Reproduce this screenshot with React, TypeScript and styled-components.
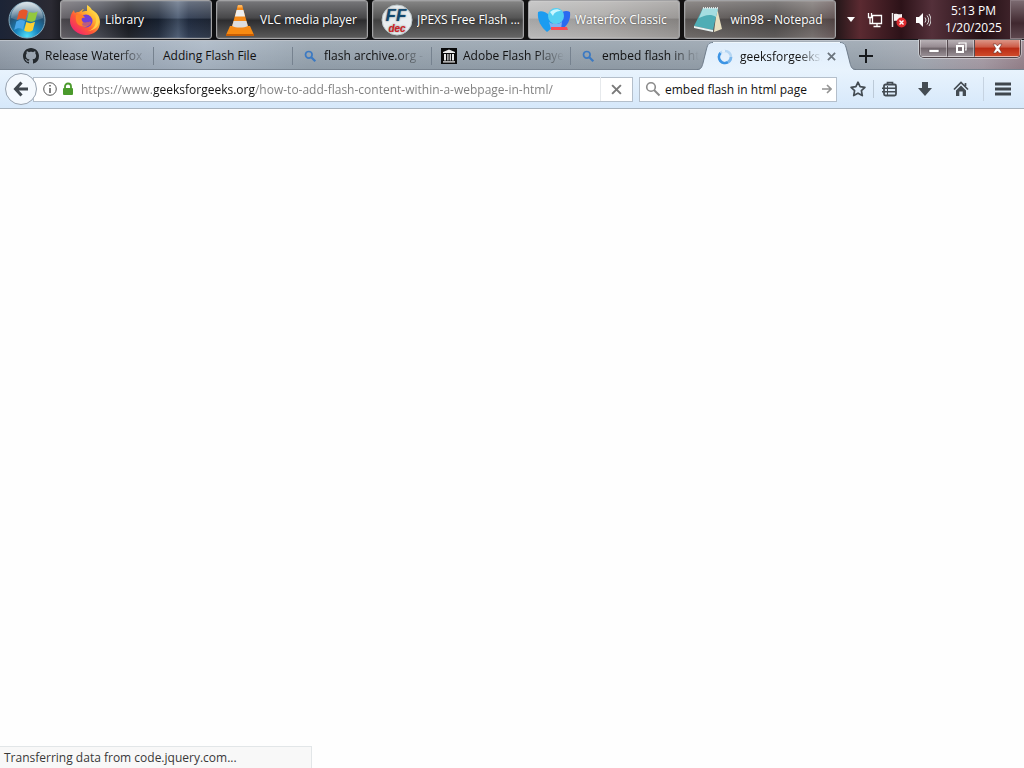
import React from 'react';
import styled, { createGlobalStyle, css } from 'styled-components';

const GlobalStyle = createGlobalStyle`
  *, *::before, *::after { box-sizing: border-box; }
  body { margin: 0; background: #fefefe; font: 12px/16px "Open Sans", "Noto Sans", sans-serif; color: #111; }
  button, input { font: inherit; color: inherit; margin: 0; }
  button { border: 0; background: none; padding: 0; cursor: default; }
  svg { display: block; flex: none; }
  ul { list-style: none; margin: 0; padding: 0; }
`;

const Desktop = styled.div`
  display: flex;
  flex-direction: column;
  min-height: 100vh;
`;

/* ---------- Taskbar ---------- */

const Taskbar = styled.header`
  display: flex;
  height: 40px;
  border-bottom: 1px solid #15161a;
  background: linear-gradient(90deg, #1c2436 0, #2b2a33 5%, #0c0d10 7%, #111 50%, #151112 81%, #5b2a31 84%, #2c1218 88%, #54303a 91%, #241015 96%, #4a2b33 100%);
`;

const StartButton = styled.button`
  width: 60px;
  padding: 1px 0 0 8px;
`;

const TaskList = styled.ul`
  display: flex;
  flex: 1;
  gap: 4px;
  min-width: 0;
`;

const TaskItem = styled.li`
  flex: 0 1 152px;
  min-width: 0;
`;

const taskTones = {
  navy: css`background: linear-gradient(180deg, #ffffff50 0, #ffffff18 45%, #00000030 50%, #ffffff10 100%), linear-gradient(90deg, #5a565c 0, #3d3f49 25%, #15181f 45%, #1b2638 65%, #46566e 78%, #26334a 85%, #232c3d 100%);`,
  dark: css`background: linear-gradient(180deg, #77777a 0, #48484a 45%, #2d2d2f 52%, #5a5a5a 100%);`,
  grey: css`background: linear-gradient(180deg, #858585 0, #555 45%, #414141 52%, #666 100%);`,
  light: css`background: linear-gradient(180deg, #ffffff50 0, #ffffff20 45%, #00000010 50%, #ffffff20 100%), linear-gradient(90deg, #b0b0b0, #a5a3a1 50%, #8d8a88);`,
  warm: css`background: linear-gradient(180deg, #ffffff48 0, #ffffff10 45%, #00000020 50%, #ffffff18 100%), linear-gradient(90deg, #625d5b 0, #4f4b4a 60%, #6b6462 85%, #5a4b4b 100%);`,
};

const TaskButton = styled.button<{ $tone: keyof typeof taskTones }>`
  display: flex;
  align-items: center;
  gap: 4px;
  width: 100%;
  height: 39px;
  padding: 0 2px 0 8px;
  border: 1px solid #a2a2a4;
  border-radius: 3px;
  box-shadow: inset 0 0 0 1px #ffffff18;
  color: #fff;
  text-shadow: 0 0 2px #0008;
  ${p => taskTones[p.$tone]}
`;

const TaskLabel = styled.span<{ $center?: boolean }>`
  flex: 1;
  padding-right: ${p => (p.$center ? 7 : 0)}px;
  overflow: hidden;
  white-space: nowrap;
  text-align: ${p => (p.$center ? 'center' : 'left')};
`;

const Tray = styled.div`
  display: flex;
  align-items: center;
  padding-left: 3px;
`;

const TrayButton = styled.button`
  display: grid;
  place-items: center;
  width: 24px;
  height: 20px;
`;

const Clock = styled.time`
  width: 75px;
  padding: 0 0 2px 2px;
  color: #fff;
  text-align: center;
  line-height: 17px;
`;

const ShowDesktop = styled.button`
  align-self: stretch;
  width: 14px;
  border: 1px solid #8a7a80;
  border-right: 0;
  background: linear-gradient(180deg, #7b6a70, #40282f 60%, #5d474e);
`;

/* ---------- Tab strip ---------- */

const TabStrip = styled.nav`
  position: relative;
  display: flex;
  align-items: stretch;
  height: 30px;
  padding-left: 14px;
  border-top: 1px solid #bcc2ca;
  background:
    linear-gradient(180deg, transparent 28px, #77828e 28px),
    linear-gradient(180deg, #ffffff20, #0000000c),
    linear-gradient(90deg, #8d98a5 0, #a3afbc 8%, #9eabba 14%, #a9b6c4 20%, #96a3af 30%, #94a0ab 60%, #98a3ae 84%, #a2a8b2 90%, #a69ba5 96%, #96818b 100%);
`;

const Tabs = styled.ul`
  display: flex;
  flex: 0 1 691px;
  min-width: 0;
`;

const Tab = styled.li`
  display: flex;
  flex: 0 1 139px;
  align-items: center;
  min-width: 0;
  height: 28px;
  margin-top: 1px;
  &:last-child { flex-basis: 135px; }
  & + &::before {
    content: '';
    align-self: center;
    width: 1px;
    height: 18px;
    background: #76828f;
  }
`;

const TabButton = styled.button<{ $faded?: boolean }>`
  display: flex;
  flex: 1;
  align-items: center;
  gap: 6px;
  min-width: 0;
  height: 100%;
  margin-right: 2px;
  padding-left: 9px;
  overflow: hidden;
  white-space: nowrap;
  ${p => p.$faded && css`mask-image: linear-gradient(90deg, #000 calc(100% - 34px), transparent calc(100% - 4px));`}
`;

/* The selected tab's curved edge lies over the end of its neighbour. */
const ActiveTab = styled.div`
  display: flex;
  flex: none;
  z-index: 1;
  margin: 1px 0 0 -8px;
`;

const ActiveBody = styled.div`
  display: flex;
  align-items: center;
  width: 127px;
  padding-left: 4px;
  border-top: 1px solid #eef6fc;
  background: linear-gradient(180deg, #dfedfb, #e8f3fd);
`;

const ActiveTitle = styled.button`
  display: flex;
  flex: 1;
  align-items: center;
  gap: 7px;
  min-width: 0;
  overflow: hidden;
  white-space: nowrap;
  mask-image: linear-gradient(90deg, #000 calc(100% - 24px), transparent);
`;

const IconButton = styled.button<{ $width?: number }>`
  display: grid;
  flex: none;
  place-items: center;
  width: ${p => p.$width ?? 24}px;
  height: 24px;
`;

const NewTab = styled(IconButton)`
  margin-top: 3px;
`;

const WindowControls = styled.div`
  position: absolute;
  top: -1px;
  right: 3px;
  display: flex;
  height: 18px;
  border: 1px solid #4c4348;
  border-top: 0;
  border-radius: 0 0 5px 5px;
  box-shadow: 0 0 0 1px #ffffff60;
  overflow: hidden;
`;

const ControlButton = styled.button<{ $close?: boolean }>`
  display: grid;
  place-items: center;
  width: ${p => (p.$close ? 46 : 27)}px;
  height: 17px;
  border: 1px solid #ffffff60;
  border-top: 0;
  background: ${p =>
    p.$close
      ? 'linear-gradient(180deg, #dc9586 0, #cc5a45 45%, #b92a13 50%, #cf4a2a 100%)'
      : 'linear-gradient(180deg, #b8b0b5 0, #94898f 45%, #6f646a 50%, #978e94 100%)'};
  & + & { border-left-color: #554a4f; }
`;

/* ---------- Navigation bar ---------- */

const NavBar = styled.div`
  display: flex;
  align-items: center;
  height: 39px;
  padding: 0 7px 0 5px;
  border-bottom: 1px solid #a9b4bf;
  background: linear-gradient(180deg, #e8f3fd, #d6e8fa);
`;

const BackButton = styled.button`
  display: grid;
  flex: none;
  place-items: center;
  z-index: 1;
  width: 32px;
  height: 32px;
  border: 1px solid #98a3b0;
  border-radius: 50%;
  background: #f4f9fe;
`;

const Field = styled.div<{ $search?: boolean }>`
  display: flex;
  flex: ${p => (p.$search ? '0 1 198px' : '1 1 0')};
  align-items: center;
  min-width: 0;
  height: 25px;
  margin-left: ${p => (p.$search ? 6 : -4)}px;
  padding-left: ${p => (p.$search ? 5 : 9)}px;
  gap: ${p => (p.$search ? 4 : 5)}px;
  border: 1px solid #b4bfcb;
  background: #fff;
`;

const TextInput = styled.input`
  flex: 1;
  min-width: 0;
  height: 100%;
  padding: 0;
  border: 0;
  outline: 0;
  background: none;
`;

/* The host name is darker than the scheme and the path. */
const AddressInput = styled(TextInput)`
  margin-left: 2px;
  background: linear-gradient(90deg, #7d7d7d 72px, #111 72px 174px, #7d7d7d 174px);
  background-clip: text;
  -webkit-text-fill-color: transparent;
`;

const StopButton = styled(IconButton)`
  border-left: 1px solid #e6e9ec;
`;

const Tools = styled.div`
  display: flex;
  align-items: center;
  padding-left: 6px;
`;

const Divider = styled.span`
  width: 1px;
  height: 18px;
  background: #bccad8;
`;

const MenuSlot = styled.div`
  margin-left: 5px;
  padding-left: 5px;
  border-left: 1px solid #c6d3e1;
`;

/* ---------- Page ---------- */

const Page = styled.main`
  display: flex;
  flex: 1;
  align-items: flex-end;
`;

const Status = styled.output`
  width: 312px;
  height: 22px;
  padding: 3px 4px;
  border: 1px solid #e2e6e8;
  border-width: 1px 1px 0 0;
  background: #f8f8f8;
  color: #383838;
  white-space: nowrap;
`;

/* ---------- Drawings ---------- */

const StartOrb = () => (
  <svg width="38" height="38" viewBox="0 0 38 38">
    <defs>
      <radialGradient id="orb" cx="50%" cy="95%" r="90%">
        <stop offset="0" stopColor="#4fe0fb" />
        <stop offset=".35" stopColor="#1a86c0" />
        <stop offset=".7" stopColor="#235274" />
        <stop offset="1" stopColor="#6f92a8" />
      </radialGradient>
      <linearGradient id="orbShine" x2="0" y2="1">
        <stop offset="0" stopColor="#fff" stopOpacity=".75" />
        <stop offset="1" stopColor="#fff" stopOpacity=".1" />
      </linearGradient>
    </defs>
    <circle cx="19" cy="19" r="18" fill="url(#orb)" stroke="#84a9bd" />
    <path d="M3 17a16 16 0 0 1 32 0c-7 4-24 4-32 0z" fill="url(#orbShine)" />
    <path d="M11 10.500c3-2.500 6.300-2.300 8.800-.6l-2.300 8.800c-2.700-1.800-5.600-1.600-8.800.3z" fill="#e5562a" />
    <path d="M21 10.700c2.700 1.600 5.600 1.600 8.700-.5l-2.400 9c-2.800 2-5.600 1.900-8.500.4z" fill="#93c83e" />
    <path d="M8.300 20.500c3-2.100 6-2 8.800-.3l-2.200 8.400c-2.600-1.700-5.600-1.800-8.700.4z" fill="#48a6e8" />
    <path d="M18.300 21.100c2.700 1.500 5.700 1.500 8.700-.4l-2.200 8.600c-2.800 2-5.800 1.900-8.700.3z" fill="#fdd032" />
  </svg>
);

const FirefoxLogo = () => (
  <svg width="32" height="32" viewBox="0 0 32 32">
    <defs>
      <linearGradient id="fox" x1=".9" y1=".05" x2=".15" y2=".9">
        <stop offset="0" stopColor="#fff25a" />
        <stop offset=".35" stopColor="#ffb52e" />
        <stop offset=".65" stopColor="#ff5a36" />
        <stop offset="1" stopColor="#f0246e" />
      </linearGradient>
    </defs>
    <path d="M18 1c3 2 4 3 5 5 4 2 8 6 8 12 0 8-6 13-14 13S1 25 1 17c0-4 1-8 4-11 0 1 .5 2 1 3 1-1 2-1 4-1 2-1 3-3 5-3-1 1-2 2-2 3 1-1 3-1 5-1 0-2 0-4 0-6z" fill="url(#fox)" />
    <circle cx="17" cy="17" r="6.500" fill="#7040d8" />
    <path d="M7 11c4-2 8 0 9 3-4-1-4 2-2 4 3 2 5-1 8 0-1 4-6 6-10 4-4-1-6-5-5-11z" fill="#ff8128" />
    <path d="M14 18c3 2 5-1 8 0-1 4-6 5-9 3z" fill="#7b3bd0" opacity=".5" />
    <path d="M20 5c5 3 8 8 7 13-1 5-4 8-8 9 8-1 11-6 11-10 0-6-4-10-10-12z" fill="#ffd043" />
  </svg>
);

const VlcLogo = () => (
  <svg width="30" height="32" viewBox="0 0 30 32">
    <path d="M5 22h20l4 9H1z" fill="#f78b12" />
    <path d="M1 30h28v2H1z" fill="#c75e05" />
    <path d="M13 1h4l6.500 23c-2 3-15 3-17 0z" fill="#f58a18" />
    <path d="M11.600 6h6.800l1.700 6.500H9.900z" fill="#eee" />
    <path d="M8.600 17h12.800l1.400 5c-4 2-12 2-15.600 0z" fill="#dedede" />
    <path d="M13 1h4l.7 2.500h-5.400z" fill="#ffb45a" />
  </svg>
);

const JpexsLogo = () => (
  <svg width="32" height="32" viewBox="0 0 32 32">
    <circle cx="16" cy="16" r="15" fill="#e9eef0" stroke="#bcc6c9" />
    <g fontFamily="Liberation Sans, sans-serif" fontWeight="700" fontStyle="italic" textAnchor="middle">
      <text x="15" y="17" fontSize="17" fill="#12486e">FF</text>
      <text x="16" y="28" fontSize="10" fill="#cf1f25">dec</text>
    </g>
  </svg>
);

const WaterfoxLogo = () => (
  <svg width="34" height="28" viewBox="0 0 34 28">
    <path d="M1 6C4 4 9 6 12 9l4 7-1 6-5 4C4 21 0 14 1 6z" fill="#1c9cf0" />
    <path d="M33 6c-3-2-8-1-10 2l-3 9 4 6c6-2 10-9 9-17z" fill="#2a6af0" />
    <circle cx="19" cy="10" r="8" fill="#55cff2" />
    <path d="M13 6c3-3 8-4 11-1-3 0-7 1-8 5z" fill="#c9f6ff" />
    <path d="M12 16c5 3 8 3 13 0l-1 7H14z" fill="#7fb2f4" />
    <path d="M14 21h16l1 3H14z" fill="#fb4b55" />
  </svg>
);

const NotepadLogo = () => (
  <svg width="30" height="28" viewBox="0 0 30 28">
    <path d="M24 2l5 21-8 3z" fill="#e8dfc0" />
    <path d="M10 2l15 0-5 22-19-4z" fill="#4fadb5" />
    <path d="M10 2l15 0-2 9C17 7 11 10 6 12z" fill="#a5dde0" />
    <path d="M1 20l19 4v2L1 22z" fill="#e8f2f2" />
    <path d="M10 2h15" stroke="#dfe5e6" strokeWidth="2" strokeDasharray="1 1" />
  </svg>
);

const CaretDown = () => (
  <svg width="8" height="5" viewBox="0 0 8 5"><path d="M0 0h8L4 5z" fill="#fff" /></svg>
);

const NetworkIcon = () => (
  <svg width="16" height="16" viewBox="0 0 16 16" fill="none" stroke="#fff">
    <path d="M5.500 3.500h9v8h-9zM10 11.500v3M6.500 14.500h7M1.500 1v4.500h3V1M3 5.500v6h2.500" strokeWidth="1.300" />
  </svg>
);

const ActionFlag = () => (
  <svg width="16" height="16" viewBox="0 0 16 16">
    <path d="M1.500 1v14" stroke="#eee" strokeWidth="1.500" />
    <path d="M3 2c3-1 4 1 8 0v7c-4 1-5-1-8 0z" fill="#f7f1f1" />
    <circle cx="10.500" cy="10.500" r="5" fill="#dc2c30" />
    <path d="M8.500 8.500l4 4m0-4l-4 4" stroke="#fff" strokeWidth="1.400" />
  </svg>
);

const Speaker = () => (
  <svg width="16" height="16" viewBox="0 0 16 16">
    <path d="M1 5h3l4-4v14l-4-4H1z" fill="#fff" />
    <path d="M10 5.500q2 2.500 0 5M12 3.500q3.500 4.500 0 9M14 2q4 6 0 12" fill="none" stroke="#ddd" />
  </svg>
);

const Github = () => (
  <svg width="16" height="16" viewBox="0 0 16 16">
    <path fill="#24292e" d="M8 0C3.580 0 0 3.580 0 8c0 3.540 2.290 6.530 5.470 7.590.4.070.550-.170.550-.380 0-.190-.010-.820-.010-1.490-2.010.370-2.530-.490-2.690-.940-.090-.230-.480-.940-.820-1.130-.280-.150-.680-.520-.010-.530.630-.010 1.080.580 1.230.820.720 1.210 1.870.870 2.330.660.070-.520.280-.870.510-1.070-1.780-.2-3.640-.890-3.640-3.950 0-.870.310-1.590.820-2.150-.080-.2-.360-1.020.080-2.120 0 0 .670-.210 2.200.820.640-.180 1.320-.270 2-.270s1.360.090 2 .270c1.530-1.040 2.200-.820 2.200-.820.440 1.100.160 1.920.080 2.120.510.560.820 1.270.820 2.150 0 3.070-1.870 3.750-3.650 3.950.290.250.540.730.540 1.480 0 1.070-.010 1.930-.010 2.200 0 .210.150.460.550.380A8.010 8.010 0 0 0 16 8c0-4.420-3.580-8-8-8z" />
  </svg>
);

const SearchFavicon = () => (
  <svg width="16" height="16" viewBox="0 0 16 16" fill="none" stroke="#3b79c2">
    <circle cx="6.800" cy="6.800" r="3.300" strokeWidth="1.700" />
    <path d="M9.300 9.300l4 4" strokeWidth="2.200" />
  </svg>
);

const SearchGlass = () => (
  <svg width="16" height="16" viewBox="0 0 16 16" fill="none" stroke="#8b8b8b">
    <circle cx="6" cy="6" r="4.300" strokeWidth="1.600" />
    <path d="M9 9l5.500 5.500" strokeWidth="2" />
  </svg>
);

const ArchiveIcon = () => (
  <svg width="16" height="16" viewBox="0 0 16 16">
    <path d="M0 0h16v16H0z" fill="#0a0a0a" />
    <path d="M8 1.500L14 4v1H2V4zM3 6h2v6.500H3zM6.300 6h1.200v6.500H6.300zM8.700 6h1.200v6.500H8.700zM11 6h2v6.500h-2zM2 13.200h12v1.300H2z" fill="#e8e8e8" />
  </svg>
);

const Throbber = () => (
  <svg width="16" height="16" viewBox="0 0 16 16" fill="none" strokeWidth="2.600">
    <circle cx="8" cy="8" r="6" stroke="#b5d6f3" />
    <path d="M3.500 4A6 6 0 0 0 11 13.200" stroke="#3c94e4" />
    <path d="M11 13.200A6 6 0 0 0 14 8" stroke="#79b6ec" />
    <path d="M5 2.800A6 6 0 0 1 8 2" stroke="#e4f0fa" />
  </svg>
);

const TabCurve = ({ flip }: { flip?: boolean }) => (
  <svg width="16" height="28" viewBox="0 0 16 28">
    <defs>
      <linearGradient id="curve" x2="0" y2="1">
        <stop offset="0" stopColor="#dfedfb" />
        <stop offset="1" stopColor="#e8f3fd" />
      </linearGradient>
    </defs>
    <g transform={flip ? 'matrix(-1 0 0 1 16 0)' : undefined}>
      <path d="M16 0C11 0 10.500 3 9 9L6 21C5 25 4 28 0 28H16z" fill="url(#curve)" />
      <path d="M16 .5C11 .5 10.500 3 9 9L6 21C5 25 4 27.500 0 27.500" fill="none" stroke="#6f7c8a" />
    </g>
  </svg>
);

const Cross = ({ color, size, width }: { color: string; size: number; width: number }) => (
  <svg width={size} height={size} viewBox="0 0 10 10"><path d="M1 1l8 8M9 1L1 9" stroke={color} strokeWidth={width} /></svg>
);

const Plus = () => (
  <svg width="14" height="14" viewBox="0 0 14 14"><path d="M7 0v14M0 7h14" stroke="#15181c" strokeWidth="2" /></svg>
);

const MinimizeIcon = () => (
  <svg width="12" height="12" viewBox="0 0 12 12"><path d="M1 7.500h10v3H1z" fill="#fff" stroke="#5c5257" strokeWidth=".6" /></svg>
);

const RestoreIcon = () => (
  <svg width="12" height="12" viewBox="0 0 12 12" fill="none" stroke="#fff">
    <path d="M4 2V1h7v7h-1" strokeWidth="1.200" />
    <path d="M2 4h6v6H2z" strokeWidth="2" />
  </svg>
);

const CloseIcon = () => (
  <svg width="13" height="11" viewBox="0 0 13 11">
    <path d="M2 1h3l1.500 2L8 1h3L8.200 5.500 11 10H8L6.500 8 5 10H2l2.800-4.500z" fill="#fff" stroke="#6e2c24" strokeWidth=".6" />
  </svg>
);

const BackArrow = () => (
  <svg width="16" height="16" viewBox="0 0 16 16" fill="none" stroke="#3f464d" strokeWidth="3">
    <path d="M15 8H3M8.500 1.500L2.500 8l6 6.500" />
  </svg>
);

const InfoIcon = () => (
  <svg width="14" height="14" viewBox="0 0 14 14" fill="none" stroke="#565656">
    <circle cx="7" cy="7" r="6.300" />
    <path d="M7 6v5M7 3v1.600" strokeWidth="1.500" />
  </svg>
);

const LockIcon = () => (
  <svg width="12" height="14" viewBox="0 0 12 14">
    <path d="M3 7V4.500a3 3 0 0 1 6 0V7" fill="none" stroke="#4b9a2c" strokeWidth="1.800" />
    <rect x="1" y="6" width="10" height="7" rx="1" fill="#4b9a2c" />
  </svg>
);

const GoArrow = () => (
  <svg width="10" height="10" viewBox="0 0 10 10" fill="none" stroke="#939393" strokeWidth="1.600"><path d="M0 5h8M5 1l4 4-4 4" /></svg>
);

const Star = () => (
  <svg width="16" height="16" viewBox="0 0 16 16" fill="none" stroke="#444c53" strokeWidth="1.700" strokeLinejoin="round">
    <path d="M8 1.200l2.100 4.500 4.800.6-3.500 3.400.9 4.900L8 12.200l-4.300 2.400.9-4.900L1.100 6.300l4.800-.6z" />
  </svg>
);

const Bookmarks = () => (
  <svg width="16" height="16" viewBox="0 0 16 16" fill="none" stroke="#444c53">
    <rect x="2" y="3.500" width="12" height="11" rx="1.500" strokeWidth="1.800" />
    <path d="M5.500 3.500V1.500h5v2" strokeWidth="1.700" />
    <path d="M0 7.200h14M0 10.800h14" strokeWidth="1.500" />
    <path d="M5.500 5v9" strokeWidth="1" />
  </svg>
);

const Download = () => (
  <svg width="16" height="16" viewBox="0 0 16 16"><path d="M5 1h6v6h4l-7 8-7-8h4z" fill="#444c53" /></svg>
);

const Home = () => (
  <svg width="16" height="16" viewBox="0 0 16 16">
    <path d="M8 4.500L13 9.500V15H9.700v-4.500H6.300V15H3V9.500z" fill="#444c53" />
    <path d="M1 8.500l7-7 7 7M12.500 5V2" fill="none" stroke="#444c53" strokeWidth="1.700" />
  </svg>
);

const MenuIcon = () => (
  <svg width="16" height="14" viewBox="0 0 16 14"><path d="M0 2h16M0 7h16M0 12h16" stroke="#3f464d" strokeWidth="3" /></svg>
);

/* ---------- Data ---------- */

const tasks: { label: string; tone: keyof typeof taskTones; icon: React.ReactNode; center?: boolean }[] = [
  { label: 'Library', tone: 'navy', icon: <FirefoxLogo /> },
  { label: 'VLC media player', tone: 'dark', icon: <VlcLogo />, center: true },
  { label: 'JPEXS Free Flash ...', tone: 'grey', icon: <JpexsLogo /> },
  { label: 'Waterfox Classic', tone: 'light', icon: <WaterfoxLogo /> },
  { label: 'win98 - Notepad', tone: 'warm', icon: <NotepadLogo />, center: true },
];

const tabs: { label: string; icon?: React.ReactNode; faded?: boolean }[] = [
  { label: 'Release Waterfox', icon: <Github />, faded: true },
  { label: 'Adding Flash File' },
  { label: 'flash archive.org -', icon: <SearchFavicon />, faded: true },
  { label: 'Adobe Flash Playe', icon: <ArchiveIcon />, faded: true },
  { label: 'embed flash in ht', icon: <SearchFavicon />, faded: true },
];

export default function App() {
  return (
    <Desktop>
      <GlobalStyle />
      <Taskbar>
        <StartButton aria-label="Start"><StartOrb /></StartButton>
        <TaskList>
          {tasks.map(t => (
            <TaskItem key={t.label}>
              <TaskButton $tone={t.tone}>
                {t.icon}
                <TaskLabel $center={t.center}>{t.label}</TaskLabel>
              </TaskButton>
            </TaskItem>
          ))}
        </TaskList>
        <Tray>
          <TrayButton aria-label="Show hidden icons"><CaretDown /></TrayButton>
          <TrayButton aria-label="Network"><NetworkIcon /></TrayButton>
          <TrayButton aria-label="Action Center"><ActionFlag /></TrayButton>
          <TrayButton aria-label="Volume"><Speaker /></TrayButton>
          <Clock>5:13 PM<br />1/20/2025</Clock>
          <ShowDesktop aria-label="Show desktop" />
        </Tray>
      </Taskbar>

      <TabStrip aria-label="Tabs">
        <Tabs>
          {tabs.map(t => (
            <Tab key={t.label}>
              <TabButton $faded={t.faded}>{t.icon}{t.label}</TabButton>
            </Tab>
          ))}
        </Tabs>
        <ActiveTab>
          <TabCurve />
          <ActiveBody>
            <ActiveTitle><Throbber />geeksforgeeks.</ActiveTitle>
            <IconButton aria-label="Close tab" $width={18}><Cross color="#6b747d" size={9} width={2} /></IconButton>
          </ActiveBody>
          <TabCurve flip />
        </ActiveTab>
        <NewTab aria-label="New tab" $width={20}><Plus /></NewTab>
        <WindowControls>
          <ControlButton aria-label="Minimize"><MinimizeIcon /></ControlButton>
          <ControlButton aria-label="Restore"><RestoreIcon /></ControlButton>
          <ControlButton aria-label="Close" $close><CloseIcon /></ControlButton>
        </WindowControls>
      </TabStrip>

      <NavBar>
        <BackButton aria-label="Back"><BackArrow /></BackButton>
        <Field>
          <InfoIcon />
          <LockIcon />
          <AddressInput
            aria-label="Address"
            defaultValue="https://www.geeksforgeeks.org/how-to-add-flash-content-within-a-webpage-in-html/"
          />
          <StopButton aria-label="Stop" $width={32}><Cross color="#7a7a7a" size={11} width={1.8} /></StopButton>
        </Field>
        <Field $search>
          <SearchGlass />
          <TextInput aria-label="Search" defaultValue="embed flash in html page" />
          <IconButton aria-label="Go" $width={18}><GoArrow /></IconButton>
        </Field>
        <Tools>
          <IconButton aria-label="Bookmark this page" $width={30}><Star /></IconButton>
          <Divider />
          <IconButton aria-label="Bookmarks" $width={32}><Bookmarks /></IconButton>
          <IconButton aria-label="Downloads" $width={38}><Download /></IconButton>
          <IconButton aria-label="Home" $width={34}><Home /></IconButton>
          <MenuSlot>
            <IconButton aria-label="Menu" $width={28}><MenuIcon /></IconButton>
          </MenuSlot>
        </Tools>
      </NavBar>

      <Page>
        <Status>Transferring data from code.jquery.com...</Status>
      </Page>
    </Desktop>
  );
}
